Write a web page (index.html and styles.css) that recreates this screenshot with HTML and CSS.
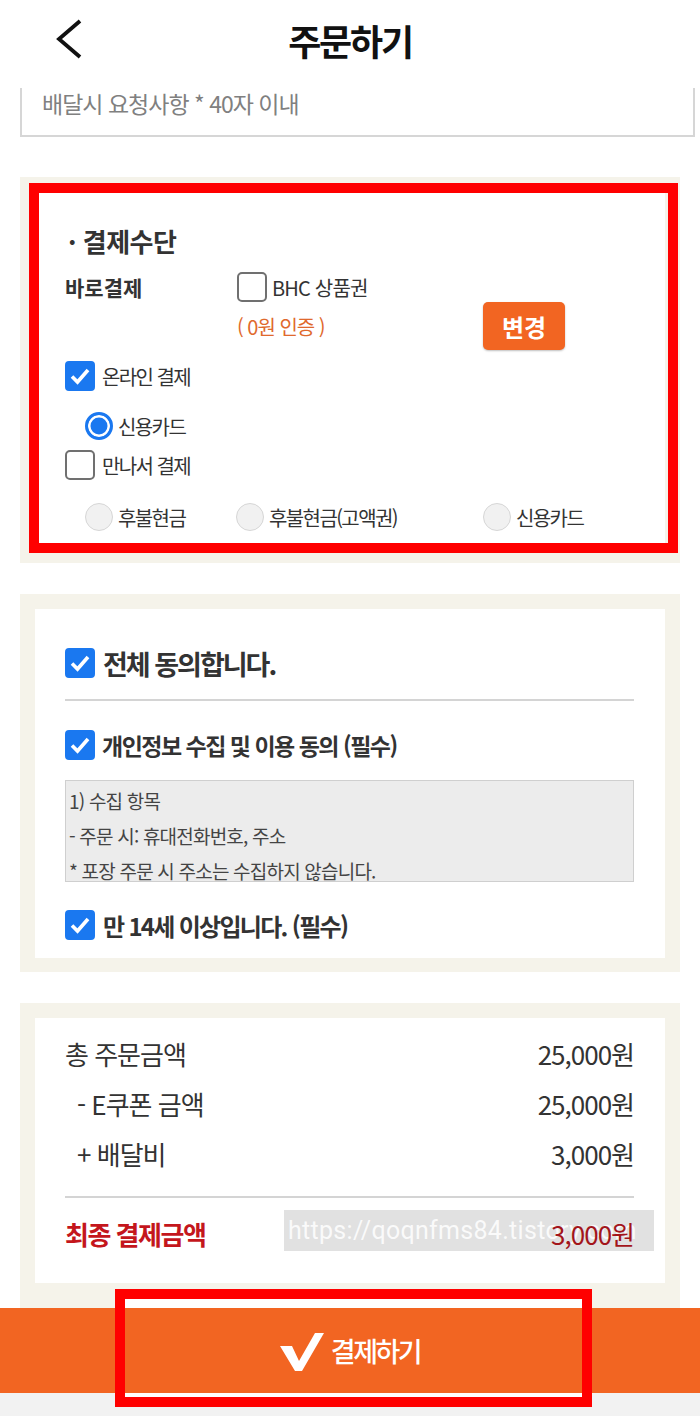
FILE: index.html
```html
<!DOCTYPE html>
<html lang="ko">
<head>
<meta charset="utf-8">
<title>주문하기</title>
<link rel="stylesheet" href="styles.css">
</head>
<body>
<header class="topbar">
  <div class="back-cell">
    <svg class="back" viewBox="0 0 30 42" width="30" height="42"><polyline points="25,3 4,21 25,39" fill="none" stroke="#111" stroke-width="3.8"/></svg>
  </div>
  <h1 class="title">주문하기</h1>
  <div></div>
</header>

<div class="request"><span class="placeholder">배달시 요청사항 * 40자 이내</span></div>

<section class="panel pay">
  <div class="card pay-card">
    <h2 class="sec-title">· 결제수단</h2>
    <div class="row direct">
      <span class="label-strong">바로결제</span>
      <span class="cb"></span><span class="opt">BHC 상품권</span>
    </div>
    <div class="row auth">
      <span class="auth-text">( 0원 인증 )</span>
      <span class="change">변경</span>
    </div>
    <div class="row online">
      <span class="cb on"><svg viewBox="0 0 24 24"><polyline points="4,12.5 9.5,18 20,6" fill="none" stroke="#fff" stroke-width="3.6"/></svg></span><span class="opt">온라인 결제</span>
    </div>
    <div class="row sub card-radio">
      <span class="radio on"></span><span class="opt ropt-label">신용카드</span>
    </div>
    <div class="row meet">
      <span class="cb"></span><span class="opt">만나서 결제</span>
    </div>
    <div class="row sub radios">
      <div class="ropt w1"><span class="radio"></span><span class="opt ropt-label">후불현금</span></div>
      <div class="ropt w2"><span class="radio"></span><span class="opt ropt-label">후불현금(고액권)</span></div>
      <div class="ropt"><span class="radio"></span><span class="opt ropt-label">신용카드</span></div>
    </div>
  </div>
  <div class="mark mark-pay"></div>
</section>

<section class="panel agree">
  <div class="card agree-card">
    <div class="row all">
      <span class="cb on"><svg viewBox="0 0 24 24"><polyline points="4,12.5 9.5,18 20,6" fill="none" stroke="#fff" stroke-width="3.6"/></svg></span><span class="all-text">전체 동의합니다.</span>
    </div>
    <hr class="divider agree-line">
    <div class="row privacy">
      <span class="cb on"><svg viewBox="0 0 24 24"><polyline points="4,12.5 9.5,18 20,6" fill="none" stroke="#fff" stroke-width="3.6"/></svg></span><span class="req-text">개인정보 수집 및 이용 동의 (필수)</span>
    </div>
    <div class="terms">
      <p>1) 수집 항목</p>
      <p>- 주문 시: 휴대전화번호, 주소</p>
      <p>* 포장 주문 시 주소는 수집하지 않습니다.</p>
    </div>
    <div class="row age">
      <span class="cb on"><svg viewBox="0 0 24 24"><polyline points="4,12.5 9.5,18 20,6" fill="none" stroke="#fff" stroke-width="3.6"/></svg></span><span class="req-text age-text">만 14세 이상입니다. (필수)</span>
    </div>
  </div>
</section>

<section class="panel summary">
  <div class="card sum-card">
    <div class="sum-row"><span class="k">총 주문금액</span><span class="v">25,000원</span></div>
    <div class="sum-row"><span class="k indent">- E쿠폰 금액</span><span class="v">25,000원</span></div>
    <div class="sum-row"><span class="k indent">+ 배달비</span><span class="v">3,000원</span></div>
    <hr class="divider sum-line">
    <div class="sum-row final"><span class="k">최종 결제금액</span><span class="v">3,000원</span></div>
    <div class="watermark">https://qoqnfms84.tistory.com</div>
  </div>
</section>

<footer class="footer">
  <div class="paybar">
    <svg class="vcheck" viewBox="0 0 44 38" width="44" height="38"><polygon points="0,13 12,13 19,28 35,0 44,0 22,38 15,38" fill="#fff"/></svg>
    <span class="pay-text">결제하기</span>
  </div>
  <div class="bottom-strip"></div>
  <div class="mark mark-btn"></div>
</footer>
</body>
</html>
```

FILE: styles.css
```css
* {
  box-sizing: border-box;
  margin: 0;
  padding: 0;
}

html, body {
  width: 700px;
}

body {
  margin: 0;
  height: 1416px;
  overflow: hidden;
  background: #fff;
  font-family: "Noto Sans CJK KR", "Noto Sans", sans-serif;
  color: #222;
}

/* header */
.topbar {
  height: 88px;
  display: grid;
  grid-template-columns: 1fr auto 1fr;
  align-items: start;
}

.back-cell {
  padding: 18px 0 0 55px;
}

.back {
  display: block;
}

.title {
  margin-top: 14px;
  line-height: 52px;
  font-size: 36px;
  font-weight: 700;
  letter-spacing: -2.2px;
  color: #111;
}

/* request input */
.request {
  height: 49px;
  margin: 0 5px 40px 20px;
  border: 2px solid #d6d6d6;
  border-top: none;
  padding-left: 20px;
}

.placeholder {
  display: block;
  line-height: 30px;
  font-size: 23px;
  letter-spacing: -1px;
  color: #808080;
}

/* panels */
.panel {
  position: relative;
  margin: 0 20px;
  padding: 15px;
  background: #f5f3ea;
}

.pay,
.agree {
  margin-bottom: 31px;
}

.card {
  background: #fff;
  padding: 0 31px 0 30px;
}

.row {
  display: flex;
  align-items: center;
}

/* payment */
.pay-card {
  padding-top: 30px;
  padding-bottom: 17px;
}

.sec-title {
  height: 38px;
  line-height: 38px;
  padding-left: 3px;
  font-size: 26px;
  font-weight: 700;
  letter-spacing: -0.5px;
  color: #333;
}

.direct {
  margin-top: 12px;
  height: 30px;
}

.label-strong {
  width: 172px;
  font-size: 21px;
  font-weight: 700;
  color: #333;
}

.opt {
  margin-left: 7px;
  font-size: 20px;
  letter-spacing: -1.6px;
  color: #333;
}

.direct .opt {
  margin-left: 5px;
  letter-spacing: -0.8px;
}

.auth {
  height: 48px;
}

.auth-text {
  margin-left: 172px;
  width: 246px;
  font-size: 20px;
  letter-spacing: -1px;
  color: #e0692d;
}

.change {
  width: 82px;
  height: 48px;
  border-radius: 5px;
  background: #f26522;
  color: #fff;
  font-size: 24px;
  font-weight: 700;
  display: flex;
  align-items: center;
  justify-content: center;
  box-shadow: 0 1px 2px rgba(0, 0, 0, 0.25);
}

.online {
  margin-top: 11px;
  height: 30px;
}

.card-radio {
  margin-top: 21px;
  height: 28px;
}

.sub {
  padding-left: 20px;
}

.meet {
  margin-top: 10px;
  height: 30px;
}

.radios {
  margin-top: 23px;
  height: 28px;
}

.ropt {
  display: flex;
  align-items: center;
}

.w1 { width: 151px; }
.w2 { width: 247px; }

.ropt-label {
  margin-left: 5px;
}

/* controls */
.cb {
  flex: none;
  width: 30px;
  height: 30px;
  border: 2px solid #707070;
  border-radius: 5px;
  background: #fff;
  display: flex;
  align-items: center;
  justify-content: center;
}

.cb.on {
  background: #1a78f0;
  border-color: #1a78f0;
  border-radius: 4px;
}

.cb svg {
  width: 24px;
  height: 24px;
  display: block;
}

.radio {
  flex: none;
  width: 28px;
  height: 28px;
  border-radius: 50%;
  border: 1.5px solid #d6d6d6;
  background: #f1f1f1;
}

.radio.on {
  border: 3px solid #1a78f0;
  background: #1a78f0;
  box-shadow: inset 0 0 0 2.5px #fff;
}

/* annotation boxes */
.mark {
  position: absolute;
  border: 10px solid #ff0000;
  pointer-events: none;
}

.mark-pay {
  left: 9px;
  top: 6px;
  width: 649px;
  height: 370px;
}

/* agreement */
.agree {
  padding-bottom: 14px;
}

.agree-card {
  padding-top: 39px;
  padding-bottom: 18px;
}

.all {
  height: 30px;
}

.all-text {
  margin-left: 8px;
  font-size: 27px;
  font-weight: 700;
  letter-spacing: -2px;
  color: #333;
}

.divider {
  border: none;
  height: 2px;
  background: #d4d4d4;
}

.agree-line {
  margin-top: 21px;
}

.privacy {
  margin-top: 29px;
  height: 30px;
}

.req-text {
  margin-left: 7px;
  font-size: 23px;
  font-weight: 700;
  letter-spacing: -1.5px;
  color: #333;
}

.age-text {
  margin-left: 8px;
  font-size: 24px;
  letter-spacing: -1.7px;
}

.terms {
  margin-top: 20px;
  height: 102px;
  overflow: hidden;
  border: 1px solid #cfcfcf;
  background: #ececec;
  padding: 2px 0 0 3px;
}

.terms p {
  line-height: 35px;
  font-size: 19px;
  letter-spacing: -0.8px;
  color: #444;
}

.age {
  margin-top: 28px;
  height: 30px;
}

/* summary */
.summary {
  padding-bottom: 25px;
}

.sum-card {
  position: relative;
  padding-top: 10px;
  padding-bottom: 25px;
}

.sum-row {
  display: flex;
  justify-content: space-between;
  align-items: center;
  height: 50px;
  font-size: 26px;
  letter-spacing: -1px;
  color: #333;
}

.sum-row .k.indent {
  padding-left: 12px;
}

.sum-line {
  margin-top: 18px;
}

.final {
  margin-top: 10px;
}

.final .k {
  color: #c4161c;
  font-weight: 700;
  letter-spacing: -1.5px;
}

.final .v {
  position: relative;
  z-index: 1;
  color: #a3151b;
}

.watermark {
  position: absolute;
  left: 249px;
  top: 192px;
  width: 370px;
  height: 41px;
  overflow: hidden;
  white-space: nowrap;
  background: rgba(200, 200, 200, 0.55);
  color: rgba(255, 255, 255, 0.85);
  font-family: Roboto, "Noto Sans", sans-serif;
  font-size: 25px;
  letter-spacing: 0.3px;
  line-height: 41px;
  padding-left: 4px;
}

/* footer */
.footer {
  position: relative;
}

.paybar {
  height: 85px;
  background: #f26522;
  display: flex;
  align-items: center;
  justify-content: center;
  gap: 7px;
  color: #fff;
}

.vcheck {
  display: block;
  margin-top: 2px;
}

.pay-text {
  font-size: 27px;
  font-weight: 500;
  letter-spacing: -2.5px;
}

.bottom-strip {
  height: 23px;
  background: #f2f2f2;
}

.mark-btn {
  left: 115px;
  top: -19px;
  width: 477px;
  height: 118px;
  box-shadow: inset 0 9px 0 #fff, inset 0 -4px 0 #fff;
}
```
